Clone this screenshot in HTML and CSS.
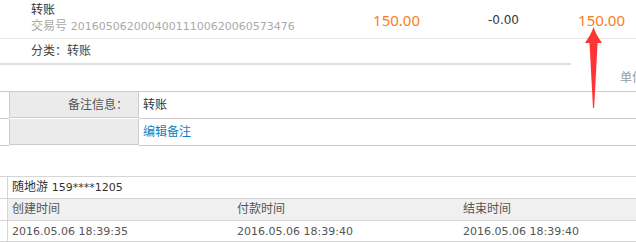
FILE: index.html
```html
<!DOCTYPE html>
<html lang="zh-CN">
<head>
<meta charset="utf-8">
<title>交易详情</title>
<link rel="stylesheet" href="styles.css">
</head>
<body>
<div class="page">
  <div class="rec-main">
    <div class="rec-info">
      <div class="rec-title">转账</div>
      <div class="rec-sub">交易号 <span class="num">20160506200040011100620060573476</span></div>
    </div>
    <div class="amt amt-in">150.00</div>
    <div class="amt amt-out">-0.00</div>
    <div class="amt amt-bal">150.00</div>
  </div>
  <div class="rec-cat">分类：转账</div>
  <div class="unit">单位：元</div>

  <div class="memo">
    <div class="memo-pad"></div>
    <div class="memo-label">备注信息：</div>
    <div class="memo-value">转账</div>
    <div class="memo-pad"></div>
    <div class="memo-label"></div>
    <div class="memo-value"><a class="link" href="#">编辑备注</a></div>
  </div>

  <div class="order">
    <div class="order-pad"></div>
    <div class="order-cell order-name">随地游 <span class="num">159****1205</span></div>
    <div class="order-pad"></div>
    <div class="order-cell order-head first">创建时间</div>
    <div class="order-cell order-head">付款时间</div>
    <div class="order-cell order-head">结束时间</div>
    <div class="order-pad last"></div>
    <div class="order-cell first last"><span class="num">2016.05.06 18:39:35</span></div>
    <div class="order-cell last"><span class="num">2016.05.06 18:39:40</span></div>
    <div class="order-cell last"><span class="num">2016.05.06 18:39:40</span></div>
  </div>

  <svg class="arrow" width="20" height="86" viewBox="0 0 20 86" aria-hidden="true">
    <path d="M10.5 2 C12 7 15 12 19 18 L14.6 18 L11.1 83 L10.0 83 L6.5 18 L2 18 C6 12 9 7 10.5 2 Z" fill="#ff3535"/>
  </svg>
</div>
</body>
</html>
```

FILE: styles.css
```css
html, body {
  margin: 0;
  padding: 0;
  background: #fff;
}
body {
  width: 636px;
  height: 242px;
  overflow: hidden;
  font-family: "DejaVu Sans", "Noto Sans CJK SC", sans-serif;
  font-size: 12px;
  color: #333;
}
.page {
  position: relative;
  width: 636px;
}
.num {
  font-family: "DejaVu Sans", sans-serif;
  font-size: 11px;
}

/* record */
.rec-main {
  display: flex;
  align-items: center;
  height: 38px;
  border-bottom: 1px solid #e6e6e6;
  padding-right: 11px;
}
.rec-info {
  flex: 1;
  padding-left: 31px;
  align-self: flex-start;
  padding-top: 2px;
}
.rec-title {
  line-height: 16px;
  color: #333;
}
.rec-sub {
  line-height: 16px;
  color: #aaa;
  white-space: nowrap;
}
.amt {
  text-align: right;
  white-space: nowrap;
}
.amt-in, .amt-bal {
  font-family: "Noto Sans", "DejaVu Sans", sans-serif;
  font-size: 15px;
  color: #fb7d20;
  line-height: 20px;
  padding-top: 1px;
}
.amt-in { width: 80px; }
.amt-out {
  width: 99px;
  font-size: 12px;
  color: #333;
  line-height: 16px;
  padding-top: 1px;
}
.amt-bal { width: 106px; }

.rec-cat {
  width: 540px;
  height: 24px;
  line-height: 24px;
  padding-left: 31px;
  border-bottom: 2px solid #dfdfdf;
  color: #444;
}
.unit {
  height: 23px;
  padding-top: 3px;
  line-height: 20px;
  padding-left: 620px;
  white-space: nowrap;
  color: #999;
}

/* memo table */
.memo {
  display: grid;
  grid-template-columns: 9px 130px 1fr;
  border-top: 1px solid #cccccc;
}
.memo > div {
  height: 26px;
  border-bottom: 1px solid #cccccc;
  line-height: 26px;
}
.memo-label {
  box-sizing: border-box;
  background: #ebebeb;
  border-left: 1px solid #cccccc;
  border-right: 1px solid #cccccc;
  text-align: right;
  padding-right: 10px;
  color: #555;
}
.memo-value {
  padding-left: 4px;
  color: #333;
}
.link {
  color: #0a84c6;
  text-decoration: none;
}

/* order table */
.order {
  margin-top: 30px;
  display: grid;
  grid-template-columns: 7px 226px 226px 1fr;
  border-top: 1px solid #d6d6d6;
}
.order > div {
  height: 21px;
  line-height: 21px;
  border-bottom: 1px solid #d6d6d6;
}
.order > div.last {
  height: 20px;
  line-height: 20px;
}
.order-cell {
  padding-left: 4px;
  color: #555;
  white-space: nowrap;
}
.order-cell.first, .order-name {
  border-left: 1px solid #d6d6d6;
}
.order-name {
  grid-column: 2 / 5;
  color: #333;
}
.order-head {
  background: #f0f0f0;
}

.arrow {
  position: absolute;
  left: 583px;
  top: 25px;
}
```
